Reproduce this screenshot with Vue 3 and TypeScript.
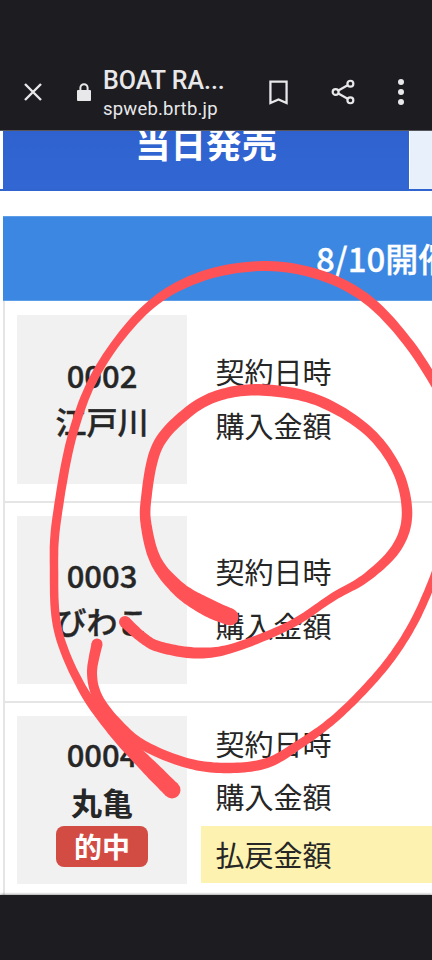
<script setup lang="ts">
interface Row { id: string; name: string; strong?: boolean; hit?: boolean; labels: string[] }
type Pt = [number, number, number]

const rows: Row[] = [
  { id: '0002', name: '江戸川', labels: ['契約日時', '購入金額'] },
  { id: '0003', name: 'びわこ', labels: ['契約日時', '購入金額'] },
  { id: '0004', name: '丸亀', strong: true, hit: true, labels: ['契約日時', '購入金額'] },
]

const outer: Pt[] = [
  [172, 790, 17], [147, 765, 16], [113, 730, 12], [82, 688, 9], [58, 630, 8.5], [54, 567, 8.5], [57, 517, 9],
  [73, 433, 9], [100, 367, 8.5], [147, 308, 9], [200, 277, 10], [263, 266, 10], [320, 275, 10], [368, 300, 10],
  [410, 345, 9.5], [445, 400, 9.5],
]
const lower: Pt[] = [
  [97, 644, 11], [92, 673, 10], [98, 698, 10], [117, 723, 10], [143, 745, 10], [187, 763, 10], [227, 768, 10.5],
  [267, 763, 10], [300, 744, 9], [333, 720, 8], [365, 689, 8], [392, 657, 8], [414, 622, 8], [432, 582, 8], [445, 545, 8],
]
const inner: Pt[] = [
  [230, 617, 17], [207, 607, 18], [180, 590, 15], [157, 563, 12], [147, 530, 11], [146, 500, 10.5], [157, 447, 11],
  [187, 413, 11], [220, 395, 11], [263, 390, 11.5], [317, 400, 11], [367, 430, 10], [397, 470, 10], [407, 513, 10.5],
  [397, 547, 10], [367, 577, 9], [333, 597, 8], [290, 625, 8], [233, 648, 9], [197, 653, 11], [160, 647, 11],
  [143, 638, 11], [125, 622, 12],
]

// Catmull-Rom sampled outline, so the pen's varying width can be filled.
function stroke(points: Pt[]) {
  const samples: Pt[] = []
  const at = (i: number) => points[Math.max(0, Math.min(points.length - 1, i))]
  for (let i = 0; i < points.length - 1; i++) {
    const [p0, p1, p2, p3] = [at(i - 1), at(i), at(i + 1), at(i + 2)]
    for (let s = 0; s < 12; s++) {
      const t = s / 12
      const v = [0, 1, 2].map((k) =>
        0.5 * (2 * p1[k] + (p2[k] - p0[k]) * t + (2 * p0[k] - 5 * p1[k] + 4 * p2[k] - p3[k]) * t * t +
          (3 * p1[k] - p0[k] - 3 * p2[k] + p3[k]) * t * t * t))
      samples.push([v[0], v[1], v[2]])
    }
  }
  samples.push(points[points.length - 1])
  const left: string[] = []
  const right: string[] = []
  samples.forEach((p, i) => {
    const a = samples[Math.max(0, i - 1)]
    const b = samples[Math.min(samples.length - 1, i + 1)]
    const dx = b[0] - a[0]
    const dy = b[1] - a[1]
    const len = Math.hypot(dx, dy) || 1
    const nx = (-dy / len) * p[2] / 2
    const ny = (dx / len) * p[2] / 2
    left.push(`${(p[0] + nx).toFixed(1)} ${(p[1] + ny).toFixed(1)}`)
    right.unshift(`${(p[0] - nx).toFixed(1)} ${(p[1] - ny).toFixed(1)}`)
  })
  const first = points[0]
  const last = points[points.length - 1]
  return {
    d: `M${left.concat(right).join('L')}Z`,
    caps: [first, last],
  }
}
const strokes = [outer, lower, inner].map(stroke)
</script>

<template>
  <div class="screen">
    <header class="toolbar">
      <svg class="ic close" viewBox="0 0 20 20"><path d="M2 2 L18 18 M18 2 L2 18" /></svg>
      <svg class="lock" viewBox="0 0 16 18"><path class="solid" d="M2 7h12a1 1 0 0 1 1 1v9a1 1 0 0 1-1 1H2a1 1 0 0 1-1-1V8a1 1 0 0 1 1-1z" /><path class="ring" d="M4.4 7.5V4.8a3.6 3.6 0 0 1 7.2 0v2.7" /></svg>
      <div class="address">
        <div class="title">BOAT RA...</div>
        <div class="url">spweb.brtb.jp</div>
      </div>
      <svg class="ic bookmark" viewBox="0 0 20 26"><path d="M1.5 1.5h17v22.5l-8.5-3.6-8.5 3.6z" /></svg>
      <svg class="ic share" viewBox="0 0 26 28"><circle cx="21" cy="5" r="3.2" /><circle cx="5" cy="14" r="3.2" /><circle cx="21" cy="23" r="3.2" /><path d="M8 12.3 L18 6.7 M8 15.7 L18 21.3" /></svg>
      <div class="dots"><i></i><i></i><i></i></div>
    </header>

    <main class="page">
      <nav class="tabs">
        <div class="tab active">当日発売</div>
        <div class="tab"></div>
      </nav>

      <section class="table">
        <div class="table-head">8/10開催</div>
        <div v-for="row in rows" :key="row.id" class="row" :class="{ hit: row.hit }">
          <div class="venue">
            <div class="num">{{ row.id }}</div>
            <div class="name" :class="{ strong: row.strong }">{{ row.name }}</div>
            <div v-if="row.hit" class="badge">的中</div>
          </div>
          <div class="info">
            <div v-for="label in row.labels" :key="label" class="label">{{ label }}</div>
            <div v-if="row.hit" class="payout">払戻金額</div>
          </div>
        </div>
      </section>
    </main>

    <footer class="navbar"></footer>

    <svg class="scribble" viewBox="0 0 432 960">
      <g v-for="(s, i) in strokes" :key="i">
        <path :d="s.d" />
        <circle v-for="(c, j) in s.caps" :key="j" :cx="c[0]" :cy="c[1]" :r="c[2] / 2" />
      </g>
    </svg>
  </div>
</template>

<style>
html, body { margin: 0; background: #fff; }
</style>

<style scoped>
.screen {
  position: relative;
  width: 432px;
  height: 960px;
  overflow: hidden;
  display: flex;
  flex-direction: column;
  background: #fff;
  font-family: "Noto Sans CJK JP", "Noto Sans", sans-serif;
  color: #262626;
}
.toolbar {
  height: 131px;
  flex: none;
  box-sizing: border-box;
  padding: 54px 0 0 23px;
  display: flex;
  align-items: center;
  background: #1c1c21;
  border-bottom: 1px solid #55555a;
  color: #e8e8ea;
  font-family: Roboto, sans-serif;
}
.ic { fill: none; stroke: #e8e8ea; stroke-width: 2.4; flex: none; }
.close { width: 20px; height: 20px; margin-right: 33px; }
.lock { width: 16px; height: 18px; margin-right: 11px; flex: none; }
.solid { fill: #e8e8ea; }
.ring { fill: none; stroke: #e8e8ea; stroke-width: 2; }
.address { width: 166px; flex: none; margin-top: 4px; }
.title { font-size: 25px; font-weight: 500; line-height: 30px; white-space: nowrap; }
.url { font-size: 18.5px; line-height: 26px; letter-spacing: 0.2px; white-space: nowrap; }
.bookmark { width: 19px; height: 25px; margin-right: 43px; }
.share { width: 24px; height: 26px; margin-right: 43px; }
.dots { display: flex; flex-direction: column; gap: 4px; }
.dots i { width: 6px; height: 6px; border-radius: 50%; background: #e8e8ea; }

.page { flex: 1; min-height: 0; overflow: hidden; }
.tabs {
  height: 60px;
  box-sizing: border-box;
  display: flex;
  padding-left: 3px;
  border-bottom: 2px solid #3065d0;
}
.tab { flex: 1; background: #e8f0fb; margin-left: 1px; }
.tab.active {
  flex: none;
  width: 406px;
  margin-left: 0;
  background: linear-gradient(#2f62cf, #3267d3);
  color: #fff;
  font-size: 35.5px;
  font-weight: 700;
  line-height: 24px;
  text-align: center;
}
.table { margin: 25px 0 0 3px; border-left: 2px solid #e5e5e5; }
.table-head {
  height: 85px;
  box-sizing: border-box;
  margin-left: -2px;
  padding-left: 313px;
  background: #3b87e2;
  border-top: 1px solid #5d9ee8;
  border-bottom: 1px solid #5d9ee8;
  color: #fff;
  font-size: 33px;
  font-weight: 500;
  line-height: 83px;
  white-space: nowrap;
  overflow: hidden;
  -webkit-text-stroke: 0.3px #fff;
}
.row {
  height: 200px;
  box-sizing: border-box;
  padding: 13px 0 17px 12px;
  display: flex;
  border-bottom: 2px solid #e5e5e5;
}
.row:nth-child(2) { height: 202px; padding-top: 14px; }
.row.hit { height: 192px; padding-top: 13px; padding-bottom: 11px; border-bottom: 0; }
.venue {
  width: 170px;
  flex: none;
  box-sizing: border-box;
  padding-bottom: 4px;
  display: flex;
  flex-direction: column;
  align-items: center;
  justify-content: center;
  background: #f1f1f1;
  font-size: 31px;
  font-weight: 500;
  line-height: 46px;
}
.num, .name { -webkit-text-stroke: 0.4px #262626; }
.name.strong { -webkit-text-stroke: 0; }
.hit .venue { padding: 0 0 2px; }
.name.strong { font-weight: 700; line-height: 49px; }
.badge {
  width: 92px;
  height: 41px;
  border-radius: 8px;
  background: #d24c44;
  color: #fff;
  font-size: 28px;
  font-weight: 700;
  line-height: 40px;
  text-align: center;
}
.info {
  flex: 1;
  min-width: 0;
  padding: 0 0 4px 14px;
  display: flex;
  flex-direction: column;
  justify-content: center;
  font-size: 29px;
  line-height: 54px;
}
.label { padding-left: 14.5px; white-space: nowrap; }
.hit .info { justify-content: flex-start; padding-bottom: 0; }
.hit .label:first-child { margin-top: 1px; }
.hit .label { line-height: 53px; }
.payout {
  height: 57px;
  margin-top: 3px;
  padding-left: 14.5px;
  background: #fdf2b0;
  line-height: 56px;
}
.navbar {
  height: 65px;
  flex: none;
  background: #1c1c21;
  box-shadow: 0 -1px 2px rgba(0, 0, 0, 0.35);
}
.scribble {
  position: absolute;
  left: 0;
  top: 0;
  width: 432px;
  height: 960px;
  pointer-events: none;
  fill: #ff5257;
}
</style>
